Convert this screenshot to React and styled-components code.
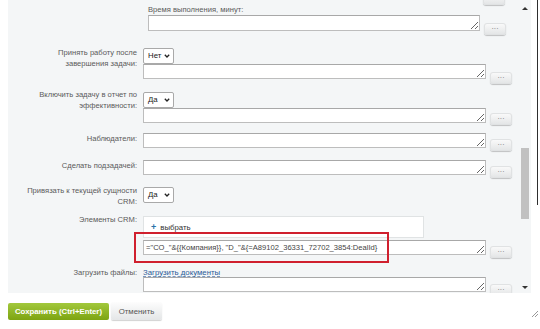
import React from "react";
import styled, { createGlobalStyle } from "styled-components";

const GlobalStyle = createGlobalStyle`
  html, body {
    margin: 0;
    padding: 0;
    background: #fff;
  }
  body {
    font-family: "Liberation Sans", Arial, sans-serif;
    font-size: 7.6px;
    color: #5a5a5a;
  }
`;

const Page = styled.div`
  width: 540px;
  height: 329px;
  display: flex;
  flex-direction: column;
  overflow: hidden;
`;

const TopArea = styled.div`
  display: flex;
  height: 293px;
`;

const Panel = styled.div`
  margin-left: 8px;
  width: 523px;
  background: #f4f6f7;
  display: flex;
`;

const Content = styled.div`
  flex: 1;
  overflow: hidden;
  display: flex;
  flex-direction: column;
`;

const Scrollbar = styled.div`
  width: 10px;
  margin-right: 1px;
  display: flex;
  flex-direction: column;
  align-items: center;
`;

const Arrow = styled.div`
  width: 0;
  height: 0;
  border-left: 3px solid transparent;
  border-right: 3px solid transparent;
  ${(p) =>
    p.$down
      ? "border-top: 3px solid #333; margin-top: auto; margin-bottom: 4px;"
      : "border-bottom: 3px solid #333; margin-top: 7px;"}
`;

const Thumb = styled.div`
  width: 8px;
  height: 71px;
  margin-top: 138px;
  background: #c1c1c1;
`;

const EdgeLine = styled.div`
  width: 1px;
  height: 205px;
  margin-left: 6px;
  background: #2e2e2e;
`;

const Row = styled.div`
  display: grid;
  grid-template-columns: 129px 1fr;
  column-gap: 6px;
  margin-top: ${(p) => p.$mt || 0}px;
`;

const Label = styled.div`
  text-align: right;
  line-height: 11px;
  white-space: nowrap;
  margin-top: ${(p) => p.$pt || 0}px;
`;

const Field = styled.div`
  display: flex;
  flex-direction: column;
  align-items: flex-start;
`;

const TimeBlock = styled.div`
  padding-left: 5px;
  display: flex;
  flex-direction: column;
  align-items: flex-start;
`;

const TopCaption = styled.div`
  line-height: 10px;
  height: 10px;
`;

const InputLine = styled.div`
  position: relative;
  display: flex;
  align-items: flex-start;
  gap: 4px;
  height: ${(p) => p.$h || 15}px;
`;

const Area = styled.textarea`
  width: ${(p) => p.$w || 343}px;
  height: ${(p) => p.$h || 15}px;
  box-sizing: border-box;
  border: 1px solid #bdbdbd;
  border-top-color: #a8a8a8;
  background: #fff;
  font-family: "Liberation Sans", Arial, sans-serif;
  font-size: 7.6px;
  color: #444;
  padding: 2px 2px 0;
  line-height: 10px;
  overflow: hidden;
  resize: vertical;
  margin: 0;
  outline: none;
  white-space: nowrap;
  flex-shrink: 0;
`;

const DotsButton = styled.div`
  width: 22px;
  height: 12px;
  margin-top: ${(p) => (p.$mt === undefined ? 7 : p.$mt)}px;
  flex-shrink: 0;
  border-radius: 3px;
  background: linear-gradient(#fbfbfb, #e2e4e5);
  box-shadow: 0 1px 1px rgba(0, 0, 0, 0.22), inset 0 0 0 1px #e0e2e3;
  display: flex;
  align-items: center;
  justify-content: center;
  font-size: 7px;
  color: #666;
  line-height: 7px;
  padding-bottom: 2px;
  box-sizing: border-box;
`;

const PartialButton = styled(DotsButton)`
  margin-left: 475px;
  margin-top: -7px;
`;

const Select = styled.div`
  width: 31px;
  height: 16px;
  box-sizing: border-box;
  border: 1px solid #a9a9a9;
  border-radius: 2px;
  background: #fff;
  display: flex;
  align-items: center;
  justify-content: space-between;
  padding: 0 3px 1px 4px;
  font-size: 7.8px;
  color: #222;
`;

const SelectText = styled.span`
  display: block;
  line-height: 8px;
  height: 8px;
`;

const Chevron = () => (
  <svg width="6" height="4" viewBox="0 0 6 4">
    <path d="M0.8 0.8 L3 3 L5.2 0.8" fill="none" stroke="#222" strokeWidth="1.3" />
  </svg>
);

const CrmBox = styled.div`
  width: 281px;
  height: 22px;
  box-sizing: border-box;
  border: 1px solid #e0e3e4;
  background: #fff;
  display: flex;
  align-items: center;
  padding: 0 0 0 7px;
  gap: 4px;
  font-size: 7.8px;
  color: #333;
  margin-bottom: 2px;
`;

const Plus = styled.span`
  color: #2a72a8;
  font-weight: bold;
  font-size: 9px;
  line-height: 9px;
`;

const RedFrame = styled.div`
  position: absolute;
  left: -9px;
  top: -8px;
  width: 251px;
  height: 27px;
  border: 2px solid #d0202e;
  pointer-events: none;
`;

const LinkLine = styled.div`
  height: 9px;
`;

const LinkText = styled.span`
  display: inline-block;
  color: #2b5c99;
  font-size: 7.8px;
  line-height: 7px;
  height: 7px;
  border-bottom: 1px dashed #7a98c2;
`;

const Footer = styled.div`
  display: flex;
  align-items: flex-start;
  padding: 9px 0 0 8px;
  gap: 2px;
  flex: 1;
`;

const SaveButton = styled.div`
  width: 101px;
  height: 17px;
  margin-top: 1px;
  border-radius: 2px;
  background: linear-gradient(#a2c83c, #7da412);
  color: #fff;
  font-size: 7.8px;
  font-weight: bold;
  display: flex;
  align-items: center;
  justify-content: center;
`;

const CancelButton = styled.div`
  width: 51px;
  height: 18px;
  border-radius: 2px;
  background: linear-gradient(#fdfdfd, #e4e6e7);
  box-shadow: 0 1px 1px rgba(0, 0, 0, 0.18);
  color: #555;
  font-size: 7.8px;
  display: flex;
  align-items: center;
  justify-content: center;
`;

const Grip = styled.svg`
  margin-left: auto;
  margin-top: 8px;
  margin-right: 1px;
`;

const Dots = () => <span>&middot;&middot;&middot;</span>;

const More = (props) => (
  <DotsButton {...props}>
    <Dots />
  </DotsButton>
);

const YesNo = ({ value }) => (
  <Select>
    <SelectText>{value}</SelectText>
    <Chevron />
  </Select>
);

export default function App() {
  return (
    <Page>
      <GlobalStyle />
      <TopArea>
        <Panel>
          <Content>
            <PartialButton>
              <Dots />
            </PartialButton>

            <Row>
              <div />
              <TimeBlock>
                <TopCaption>Время выполнения, минут:</TopCaption>
                <InputLine $h={16}>
                  <Area rows={1} $w={332} $h={16} readOnly />
                  <More $mt={8} />
                </InputLine>
              </TimeBlock>
            </Row>

            <Row $mt={17}>
              <Label $pt={-1}>
                Принять работу после
                <br />
                завершения задачи:
              </Label>
              <Field>
                <YesNo value="Нет" />
                <InputLine>
                  <Area rows={1} readOnly />
                  <More $mt={8} />
                </InputLine>
              </Field>
            </Row>

            <Row $mt={13}>
              <Label $pt={-3}>
                Включить задачу в отчет по
                <br />
                эффективности:
              </Label>
              <Field>
                <YesNo value="Да" />
                <InputLine>
                  <Area rows={1} readOnly />
                  <More $mt={5} />
                </InputLine>
              </Field>
            </Row>

            <Row $mt={10}>
              <Label $pt={0}>Наблюдатели:</Label>
              <Field>
                <InputLine>
                  <Area rows={1} readOnly />
                  <More $mt={6} />
                </InputLine>
              </Field>
            </Row>

            <Row $mt={12}>
              <Label $pt={0}>Сделать подзадачей:</Label>
              <Field>
                <InputLine>
                  <Area rows={1} readOnly />
                  <More $mt={6} />
                </InputLine>
              </Field>
            </Row>

            <Row $mt={12}>
              <Label $pt={-2}>
                Привязать к текущей сущности
                <br />
                CRM:
              </Label>
              <Field>
                <YesNo value="Да" />
              </Field>
            </Row>

            <Row $mt={9}>
              <Label $pt={-2}>Элементы CRM:</Label>
              <Field>
                <CrmBox>
                  <Plus>+</Plus>
                  выбрать
                </CrmBox>
                <InputLine>
                  <Area
                    rows={1}
                    readOnly
                    value={'="CO_"&{{Компания}}, "D_"&{=A89102_36331_72702_3854:DealId}'}
                  />
                  <More $mt={6} />
                  <RedFrame />
                </InputLine>
              </Field>
            </Row>

            <Row $mt={13}>
              <Label $pt={-1}>Загрузить файлы:</Label>
              <Field>
                <LinkLine>
                  <LinkText>Загрузить документы</LinkText>
                </LinkLine>
                <InputLine>
                  <Area rows={1} readOnly />
                  <More $mt={7} />
                </InputLine>
              </Field>
            </Row>
          </Content>
          <Scrollbar>
            <Arrow />
            <Thumb />
            <Arrow $down />
          </Scrollbar>
        </Panel>
        <EdgeLine />
      </TopArea>
      <Footer>
        <SaveButton>Сохранить (Ctrl+Enter)</SaveButton>
        <CancelButton>Отменить</CancelButton>
        <Grip width="8" height="8" viewBox="0 0 8 8">
          <path d="M7 1 L1 7 M7 4 L4 7" stroke="#999" strokeWidth="1" />
        </Grip>
      </Footer>
    </Page>
  );
}
